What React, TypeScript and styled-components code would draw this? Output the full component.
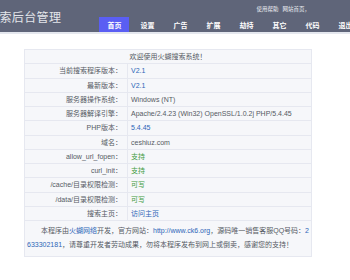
import React from "react";
import styled, { createGlobalStyle } from "styled-components";

const Global = createGlobalStyle`
  html, body { margin: 0; padding: 0; background: #ffffff; overflow: hidden; }
  body { font-family: "Liberation Sans", "Noto Sans CJK SC", sans-serif; }
`;

const Page = styled.div`
  width: 350px;
  height: 280px;
  overflow: hidden;
  background: #ffffff;
`;

const Header = styled.header`
  display: grid;
  grid-template-columns: auto 1fr;
  grid-template-rows: 17px 15px;
  height: 32px;
  background: #5f6579;
  border-bottom: 2px solid #e4e7ee;
  overflow: hidden;
`;

const Title = styled.div`
  grid-row: 1 / 3;
  align-self: center;
  margin-left: -13px;
  margin-top: 1px;
  font-family: "Noto Sans CJK SC", sans-serif;
  font-size: 12px;
  letter-spacing: 0.4px;
  color: #e3e5ea;
  white-space: nowrap;
`;

const TopLinks = styled.div`
  grid-column: 2;
  grid-row: 1;
  padding-left: 195px;
  padding-top: 5px;
  font-family: "Noto Sans CJK SC", sans-serif;
  font-size: 5.5px;
  color: #eef0f4;
  white-space: nowrap;
  display: flex;
  gap: 4px;
`;

const Nav = styled.nav`
  grid-column: 2;
  grid-row: 2;
  display: flex;
  gap: 3px;
  margin-left: 38px;
`;

const NavItem = styled.a<{ $active?: boolean }>`
  flex: 0 0 30px;
  display: flex;
  align-items: center;
  justify-content: center;
  background: ${(p) => (p.$active ? "#5a5ef3" : "transparent")};
  color: #ffffff;
  font-family: "Noto Sans CJK SC", sans-serif;
  font-size: 7px;
  font-weight: 700;
  text-decoration: none;
`;

const Table = styled.table`
  margin: 15px 0 0 24px;
  width: 288px;
  border-collapse: collapse;
  background: #f6f7fa;
  font-family: "Liberation Sans", "Noto Sans CJK SC", sans-serif;
  font-size: 7px;
  color: #555a63;
  table-layout: fixed;
`;

const LabelCol = styled.col`
  width: 103px;
`;

const Cell = styled.td`
  border: 1px solid #e6e8f0;
  height: 13.25px;
  padding: 0 3px;
  line-height: 13px;
  white-space: nowrap;
  overflow: hidden;
  vertical-align: middle;
`;

const Label = styled(Cell)`
  text-align: right;
  padding-right: 5px;
`;

const Welcome = styled(Cell)`
  text-align: center;
`;

const Footer = styled(Cell)`
  white-space: normal;
  word-break: break-all;
  text-indent: 14px;
  line-height: 14px;
  padding: 3px 2px 4px 2px;
`;

const Val = styled.span<{ $tone?: "blue" | "green" | "gray" }>`
  color: ${(p) =>
    p.$tone === "blue" ? "#2d66b8" : p.$tone === "green" ? "#3f9b3f" : "#555a63"};
`;

const rows: { label: string; value: string; tone?: "blue" | "green" | "gray" }[] = [
  { label: "当前搜索程序版本：", value: "V2.1", tone: "blue" },
  { label: "最新版本：", value: "V2.1", tone: "blue" },
  { label: "服务器操作系统：", value: "Windows (NT)", tone: "gray" },
  {
    label: "服务器解译引擎：",
    value: "Apache/2.4.23 (Win32) OpenSSL/1.0.2j PHP/5.4.45",
    tone: "gray",
  },
  { label: "PHP版本：", value: "5.4.45", tone: "blue" },
  { label: "域名：", value: "ceshiuz.com", tone: "gray" },
  { label: "allow_url_fopen：", value: "支持", tone: "green" },
  { label: "curl_init：", value: "支持", tone: "green" },
  { label: "/cache/目录权限检测：", value: "可写", tone: "green" },
  { label: "/data/目录权限检测：", value: "可写", tone: "green" },
  { label: "搜索主页：", value: "访问主页", tone: "blue" },
];

const navItems = ["首页", "设置", "广告", "扩展", "劫持", "其它", "代码", "退出"];

export default function App() {
  return (
    <Page>
      <Global />
      <Header>
        <Title>搜索后台管理</Title>
        <TopLinks>
          <span>使用帮助</span>
          <span>网站首页，</span>
        </TopLinks>
        <Nav>
          {navItems.map((n, i) => (
            <NavItem key={n} $active={i === 0}>
              {n}
            </NavItem>
          ))}
        </Nav>
      </Header>
      <Table>
        <colgroup>
          <LabelCol />
          <col />
        </colgroup>
        <tbody>
          <tr>
            <Welcome colSpan={2}>欢迎使用火蝴搜索系统！</Welcome>
          </tr>
          {rows.map((r) => (
            <tr key={r.label}>
              <Label>{r.label}</Label>
              <Cell>
                <Val $tone={r.tone}>{r.value}</Val>
              </Cell>
            </tr>
          ))}
          <tr>
            <Footer colSpan={2}>
              本程序由<Val $tone="blue">火蝴网络</Val>开发，官方网站：
              <Val $tone="blue">http://www.ck6.org</Val>，源码唯一销售客服QQ号码：
              <Val $tone="blue">2633302181</Val>，请尊重开发者劳动成果，勿将本程序发布到网上或倒卖，感谢您的支持！
            </Footer>
          </tr>
        </tbody>
      </Table>
    </Page>
  );
}
